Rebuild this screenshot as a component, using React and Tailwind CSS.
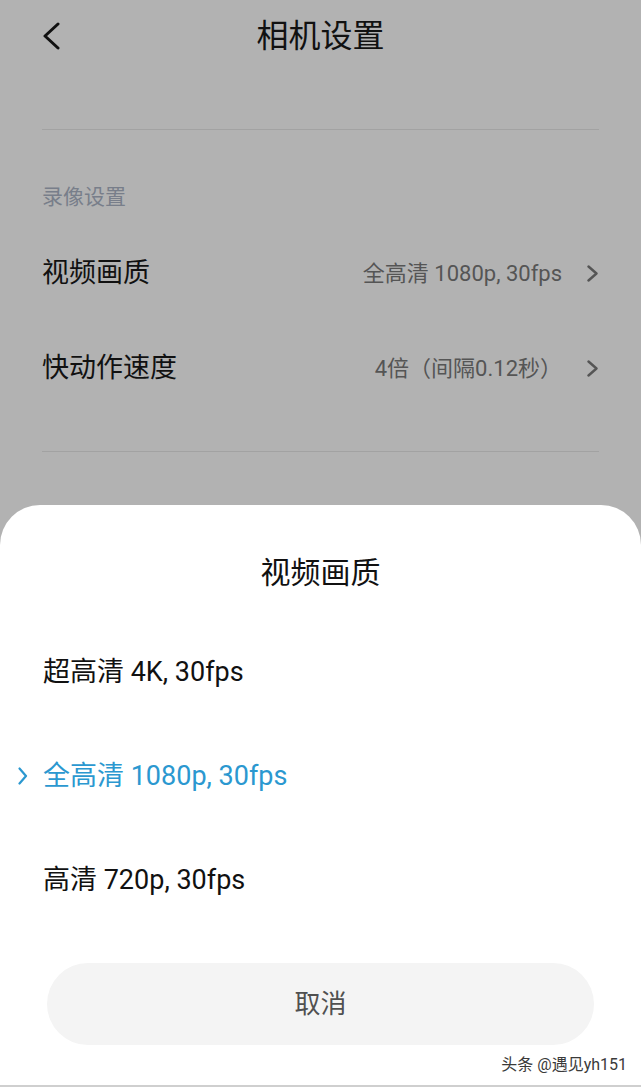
import React from 'react';

const Chevron = ({ className, d, width, height, stroke = 2 }) => (
  <svg width={width} height={height} viewBox={`0 0 ${width} ${height}`} fill="none" className={className}>
    <path d={d} stroke="currentColor" strokeWidth={stroke} strokeLinecap="round" strokeLinejoin="round" />
  </svg>
);

const SettingRow = ({ label, value }) => (
  <div className="h-[95px] flex items-center justify-between">
    <span className="text-[27px] leading-none text-[#111]">{label}</span>
    <div className="flex items-center gap-[24px] text-[#555]">
      <span className="text-[22px] leading-none">{value}</span>
      <Chevron width={13} height={17} d="M2.5 1.5 L10.5 8.5 L2.5 15.5" stroke={2.4} />
    </div>
  </div>
);

const options = [
  { label: '超高清 4K, 30fps' },
  { label: '全高清 1080p, 30fps', selected: true },
  { label: '高清 720p, 30fps' },
];

const App = () => {
  return (
    <div className="w-full h-[1087px] flex flex-col bg-[#b2b2b2] font-['Roboto','Noto_Sans_CJK_SC',sans-serif] overflow-hidden">
      {/* Dimmed settings page */}
      <div className="h-[505px] px-[42px] flex flex-col shrink-0">
        <div className="h-[72px] grid grid-cols-[1fr_auto_1fr] items-center">
          <Chevron className="text-[#111]" width={18} height={28} d="M16 2 L3 14 L16 26" stroke={3} />
          <span className="text-[32px] leading-none text-[#111]">相机设置</span>
          <span />
        </div>
        <div className="mt-[57px] h-px bg-[#a2a2a2]" />
        <div className="mt-[53px] text-[21px] leading-[28px] text-[#787e8a]">录像设置</div>
        <div className="mt-[15px]">
          <SettingRow label="视频画质" value="全高清 1080p, 30fps" />
          <SettingRow label="快动作速度" value="4倍（间隔0.12秒）" />
        </div>
        <div className="mt-[35px] h-px bg-[#a2a2a2]" />
      </div>

      {/* Bottom sheet */}
      <div className="flex-1 bg-white rounded-t-[40px] flex flex-col border-b-2 border-[#cfcfcf]">
        <div className="pt-[48px] text-center text-[30px] leading-[40px] text-[#111]">视频画质</div>
        <div className="mt-[27px]">
          {options.map((o) => (
            <div
              key={o.label}
              className={`h-[104px] flex items-center px-[18px] ${o.selected ? 'text-[#2b98d0]' : 'text-[#111]'}`}
            >
              <span className="w-[25px] flex items-center">
                {o.selected && <Chevron width={10} height={18} d="M1.5 1.5 L8 9 L1.5 16.5" stroke={2.2} />}
              </span>
              <span className="text-[27px] leading-none">{o.label}</span>
            </div>
          ))}
        </div>
        <div className="mt-[31px] mx-[47px] h-[82px] rounded-full bg-[#f4f4f4] flex items-center justify-center text-[26px] text-[#505050]">
          取消
        </div>
        <div className="flex-1 flex items-center justify-end pr-[14px]">
          <span className="text-[16px] leading-none text-[#3a3a3a] [text-shadow:0_0_2px_#fff,0_0_1px_#fff]">
            头条 @遇见yh151
          </span>
        </div>
      </div>
    </div>
  );
};

export default App;
